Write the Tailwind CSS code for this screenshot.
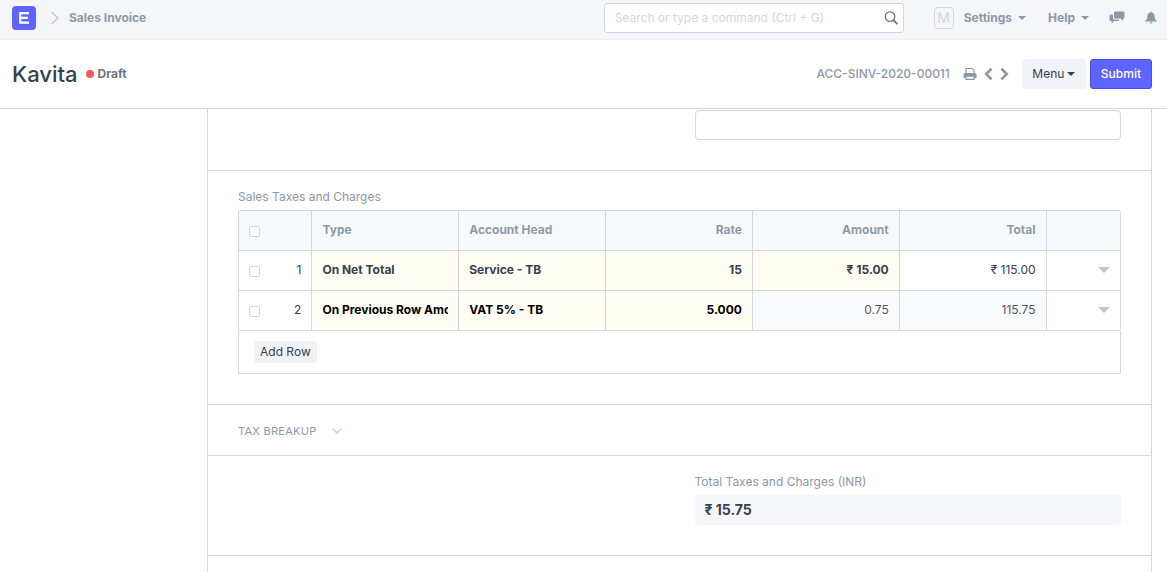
<!DOCTYPE html>
<html lang="en">
<head>
<meta charset="utf-8">
<meta name="viewport" content="width=device-width, initial-scale=1">
<title>Sales Invoice</title>
<script src="https://cdn.jsdelivr.net/npm/@tailwindcss/browser@4"></script>
</head>
<body class="flex h-screen flex-col overflow-hidden bg-white font-['Inter',sans-serif] text-xs text-[#36414c]">

<nav class="flex h-10 shrink-0 items-center border-b border-[#ebeff2] bg-[#f5f6fa] pr-[10px] pb-1 pl-3 font-bold text-[#8d99a6]">
  <a href="#" aria-label="Home" class="flex size-6 items-center justify-center rounded bg-[#5e64ff]">
    <svg class="size-6" viewBox="0 0 24 24" fill="none" stroke="#fff" stroke-width="2.2"><path d="M17 7.100H8.200v9.600H17M8.200 11.900h7.600"/></svg>
  </a>
  <svg class="ml-[14px] h-4 w-[10px]" viewBox="0 0 10 16" fill="none" stroke="#c0c9d2" stroke-width="1.500"><path d="M1.500 2l6.500 6-6.500 6"/></svg>
  <a href="#" class="ml-[9px]">Sales Invoice</a>

  <label class="mr-[30px] ml-auto flex h-[30px] w-[300px] items-center rounded-[3px] border border-[#d1d8dd] bg-white pr-1 pl-[10px]">
    <input type="text" aria-label="Search" placeholder="Search or type a command (Ctrl + G)" class="min-w-0 flex-1 font-normal outline-none placeholder:text-[#d1d8dd]">
    <svg class="size-4" viewBox="0 0 16 16" fill="none" stroke="#6c7680" stroke-width="1.300"><circle cx="7" cy="6.600" r="4.800"/><path d="M10.400 10.200l4 4" stroke-width="1.800"/></svg>
  </label>
  <a href="#" aria-label="User M" class="flex h-[22px] w-5 items-center justify-center rounded border border-[#d1d8dd] text-sm font-normal text-[#d1d8dd]">M</a>
  <button class="ml-[10px] flex items-center gap-[6px] font-bold">Settings
    <svg class="h-1 w-2" viewBox="0 0 8 4" fill="currentColor"><path d="M0 0h8L4 4z"/></svg></button>
  <button class="ml-[22px] flex items-center gap-[6px] font-bold">Help
    <svg class="h-1 w-2" viewBox="0 0 8 4" fill="currentColor"><path d="M0 0h8L4 4z"/></svg></button>
  <button aria-label="Chat" class="ml-5">
    <svg class="h-[14px] w-4" viewBox="0 0 16 14" fill="currentColor"><path d="M6 .5h8.500q1 0 1 1v5q0 1-1 1H14V10l-2.500-2.500H6q-1 0-1-1v-5q0-1 1-1z"/><path d="M1.500 3.500H4V7q0 1.500 1.500 1.500H10v.5q0 1-1 1H5L2.500 12.500V10h-1q-1 0-1-1V4.500q0-1 1-1z"/></svg></button>
  <button aria-label="Notifications" class="ml-5">
    <svg class="h-[13px] w-3" viewBox="0 0 12 13" fill="currentColor"><path d="M6 .5c.5 0 .8.3.8.9C8.700 1.800 9.500 3.200 9.600 5c.1 2.500.6 3.700 2.200 5v.6H.2V10c1.600-1.300 2.100-2.500 2.200-5 .1-1.800.9-3.200 2.800-3.600 0-.6.3-.9.8-.9zM4.600 11.200h2.800C7.300 12 6.800 12.500 6 12.500S4.700 12 4.600 11.200z"/></svg></button>
</nav>

<header class="flex h-[69px] shrink-0 items-center border-b border-[#d1d8dd] pr-[15px] pl-3">
  <h1 class="text-[22px] leading-8 font-medium">Kavita</h1>
  <span class="ml-2 size-2 rounded-full bg-[#ff5858]"></span>
  <span class="ml-1 font-bold text-[#6c7680]">Draft</span>
  <span class="ml-auto font-medium text-[#8d99a6]">ACC-SINV-2020-00011</span>
  <button aria-label="Print" class="ml-[13px] text-[#8d99a6]">
    <svg class="size-[14px]" viewBox="0 0 14 14"><path d="M3 6.500V1.500h6.500L11 3v3.500" fill="none" stroke="currentColor" stroke-width="1.200"/><path d="M2 6h10q1.500 0 1.500 1.500V11h-2.300V9H2.800v2H.5V7.500Q.5 6 2 6z" fill="currentColor"/><path d="M3 9.200h8v3.200H3z" fill="#fff" stroke="currentColor" stroke-width="1.200"/></svg></button>
  <button aria-label="Previous" class="ml-[7px] text-[#8d99a6]">
    <svg class="h-[14px] w-[9px]" viewBox="0 0 9 14" fill="none" stroke="currentColor" stroke-width="2.600"><path d="M7.500 1.800L2.200 7l5.300 5.200"/></svg></button>
  <button aria-label="Next" class="ml-[7px] text-[#8d99a6]">
    <svg class="h-[14px] w-[9px]" viewBox="0 0 9 14" fill="none" stroke="currentColor" stroke-width="2.600"><path d="M1.500 1.800L6.800 7l-5.300 5.200"/></svg></button>
  <button class="ml-[13px] flex h-[30px] w-16 items-center justify-center gap-[3px] rounded-[3px] bg-[#f0f3f8]">Menu
    <svg class="h-1 w-2" viewBox="0 0 8 4" fill="currentColor"><path d="M0 0h8L4 4z"/></svg></button>
  <button class="ml-1 h-[30px] rounded-[3px] border border-[#444bff] bg-[#5e64ff] px-[10px] font-medium text-white">Submit</button>
</header>

<main class="mr-[15px] ml-[207px] min-h-0 flex-1 overflow-hidden border-x border-[#d1d8dd]">
  <section class="grid grid-cols-2 gap-[30px] border-b border-[#d1d8dd] px-[30px] pt-px pb-[30px]">
    <input type="text" aria-label="Reference" class="col-start-2 h-[30px] rounded border border-[#d1d8dd] px-[10px] outline-none">
  </section>

  <section class="border-b border-[#d1d8dd] px-[30px] pt-[18px] pb-[30px]">
    <h2 id="taxes" class="mb-[5px] text-[#8d99a6]">Sales Taxes and Charges</h2>
    <table aria-labelledby="taxes" class="w-full table-fixed border-separate border-spacing-0 rounded-[3px] border border-b-0 border-[#d1d8dd]">
      <colgroup><col class="w-1/12"><col class="w-2/12"><col class="w-2/12"><col class="w-2/12"><col class="w-2/12"><col class="w-2/12"><col class="w-1/12"></colgroup>
      <thead>
        <tr class="h-10 bg-[#f7fafc] text-[#8d99a6] *:border-r *:border-b *:border-[#d1d8dd] *:px-[10px] *:pb-px">
          <th class="rounded-tl-[3px] text-left"><input type="checkbox" aria-label="Select all rows" class="mt-[2px] block size-[11px] appearance-none rounded-[2px] border border-[#d1d8dd] bg-white"></th>
          <th class="text-left">Type</th>
          <th class="text-left">Account Head</th>
          <th class="text-right">Rate</th>
          <th class="text-right">Amount</th>
          <th class="text-right">Total</th>
          <td class="rounded-tr-[3px] border-r-0!"></td>
        </tr>
      </thead>
      <tbody>
        <tr class="h-10 *:border-r *:border-b *:border-[#d1d8dd] *:px-[10px] *:pb-px">
          <td><div class="flex items-center justify-between"><input type="checkbox" id="row1" class="mt-[2px] size-[11px] appearance-none rounded-[2px] border border-[#d1d8dd]"><label for="row1">1</label></div></td>
          <td class="bg-[#fffdf4] font-bold">On Net Total</td>
          <td class="bg-[#fffdf4] font-bold">Service - TB</td>
          <td class="bg-[#fffdf4] text-right font-bold">15</td>
          <td class="bg-[#fffdf4] text-right font-bold">₹ 15.00</td>
          <td class="text-right">₹ 115.00</td>
          <td class="border-r-0!"><button aria-label="Open row 1" class="ml-auto block"><svg class="h-[6px] w-3" viewBox="0 0 12 6" fill="#c8c8c8"><path d="M0 0h12L6 6z"/></svg></button></td>
        </tr>
        <tr class="h-10 *:border-r *:border-b *:border-[#d1d8dd] *:px-[10px] *:pb-px">
          <td><div class="flex items-center justify-between"><input type="checkbox" id="row2" class="mt-[2px] size-[11px] appearance-none rounded-[2px] border border-[#d1d8dd]"><label for="row2">2</label></div></td>
          <td class="bg-[#fffdf4]"><input type="text" aria-label="Type" value="On Previous Row Amount" class="block w-full font-bold text-black outline-none"></td>
          <td class="bg-[#fffdf4]"><input type="text" aria-label="Account Head" value="VAT 5% - TB" class="block w-full font-bold text-black outline-none"></td>
          <td class="bg-[#fffdf4]"><input type="text" aria-label="Rate" value="5.000" class="block w-full text-right font-bold text-black outline-none"></td>
          <td class="bg-[#fafbfc] text-right text-[#555]">0.75</td>
          <td class="bg-[#fafbfc] text-right text-[#555]">115.75</td>
          <td class="border-r-0!"><button aria-label="Open row 2" class="ml-auto block"><svg class="h-[6px] w-3" viewBox="0 0 12 6" fill="#c8c8c8"><path d="M0 0h12L6 6z"/></svg></button></td>
        </tr>
      </tbody>
    </table>
    <div class="border border-t-0 border-[#d1d8dd] px-[15px] py-[10px]">
      <button class="block h-[22px] rounded-[3px] bg-[#f0f3f8] px-[6px]">Add Row</button>
    </div>
  </section>

  <section class="border-b border-[#d1d8dd] px-[30px] pt-[18px] pb-4">
    <button class="flex items-center gap-4 text-[11px] leading-4 tracking-wide text-[#8d99a6] uppercase">Tax Breakup
      <svg class="h-[6px] w-[10px]" viewBox="0 0 10 6" fill="none" stroke="#d1d8dd" stroke-width="1.800"><path d="M.7.7L5 5 9.300.7"/></svg></button>
  </section>

  <section class="grid grid-cols-2 gap-[30px] border-b border-[#d1d8dd] px-[30px] pt-[18px] pb-[30px]">
    <div class="col-start-2">
      <div class="mb-[5px] text-[#8d99a6]">Total Taxes and Charges (INR)</div>
      <div class="flex h-[30px] items-center rounded-[3px] bg-[#f5f6fa] px-[10px] text-sm font-bold">₹ 15.75</div>
    </div>
  </section>
</main>
</body>
</html>
